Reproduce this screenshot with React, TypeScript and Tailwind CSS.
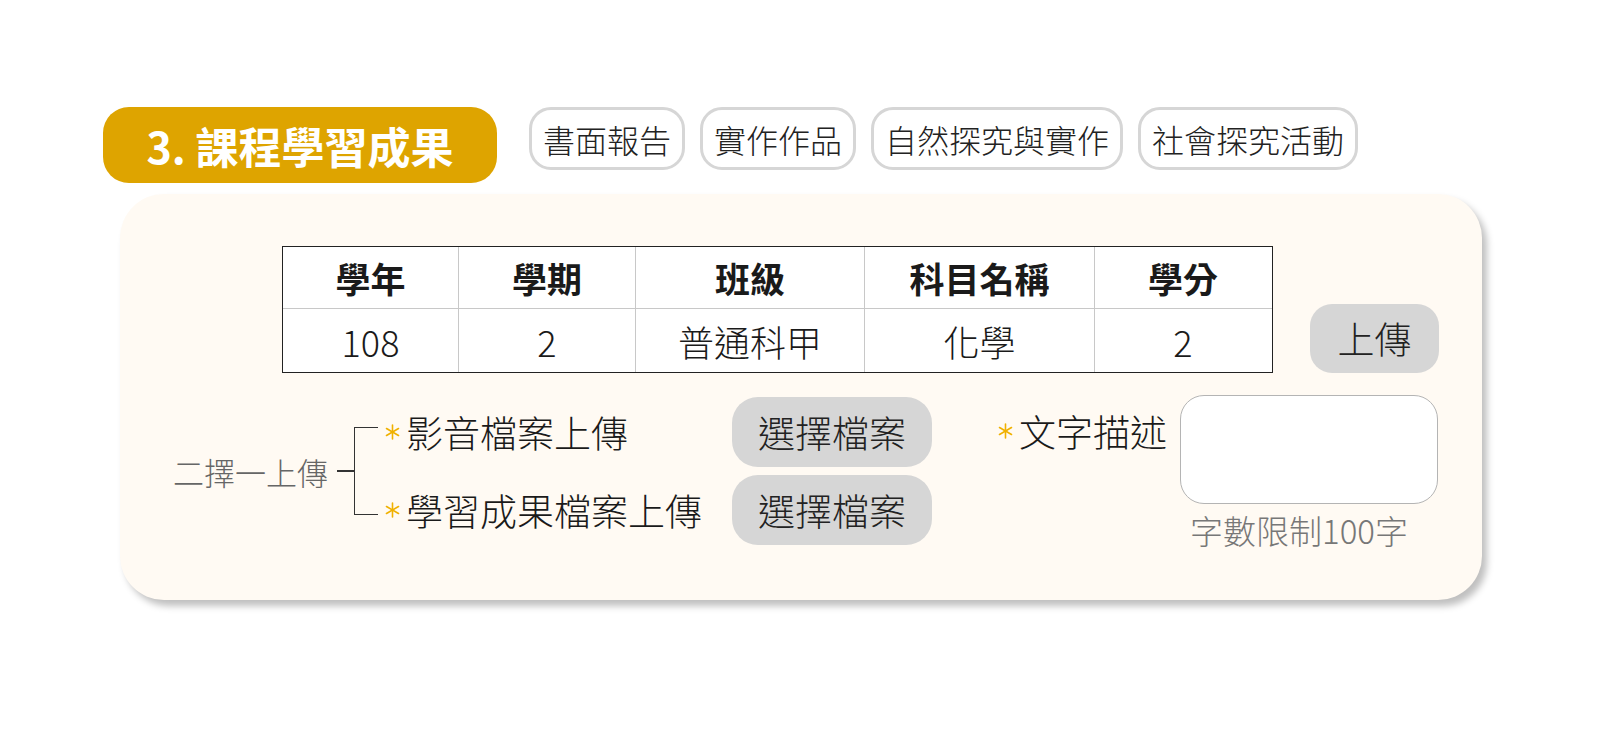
import React from 'react';

const font = { fontFamily: '"Noto Sans CJK TC", "Noto Sans", sans-serif' };

const tags = ['書面報告', '實作作品', '自然探究與實作', '社會探究活動'];

const headers = ['學年', '學期', '班級', '科目名稱', '學分'];
const values = ['108', '2', '普通科甲', '化學', '2'];

const Star: React.FC = () => (
  <svg width="15" height="16" viewBox="0 0 15 16" className="shrink-0">
    <g stroke="#f0b100" strokeWidth="1.6" strokeLinecap="round">
      <line x1="7.5" y1="1" x2="7.5" y2="15" />
      <line x1="1.5" y1="4.5" x2="13.5" y2="11.5" />
      <line x1="1.5" y1="11.5" x2="13.5" y2="4.5" />
    </g>
  </svg>
);

const App: React.FC = () => {
  return (
    <div className="min-h-screen bg-white pt-[107px] pl-[103px] font-light text-[#1a1a1a]" style={font}>
      {/* Title and tags */}
      <div className="flex items-start gap-[32px]">
        <div className="flex h-[76px] w-[394px] items-center justify-center rounded-[26px] bg-[#dea400] text-[43px] font-bold leading-none text-white">
          3. 課程學習成果
        </div>
        <div className="flex gap-[15px]">
          {tags.map((t) => (
            <div
              key={t}
              className="flex h-[63px] items-center rounded-[22px] border-[3px] border-[#d6d6d6] bg-white px-[11px] text-[32px] leading-none text-[#222]"
            >
              {t}
            </div>
          ))}
        </div>
      </div>

      {/* Card */}
      <div className="mt-[11px] ml-[17px] h-[406px] w-[1362px] rounded-[44px] bg-[#fffaf3] pt-[52px] shadow-[5px_6px_7px_rgba(0,0,0,0.25)]">
        <div className="flex items-end pl-[162px]">
          <div className="w-[991px] border-[1.5px] border-[#222] bg-white">
            <div className="grid grid-cols-[176px_177px_229px_230px_176px] border-b border-[#c8c8c8]">
              {headers.map((h, i) => (
                <div
                  key={h}
                  className={`flex h-[61px] items-center justify-center text-[35px] font-bold leading-none ${i < 4 ? 'border-r border-[#c8c8c8]' : ''}`}
                >
                  {h}
                </div>
              ))}
            </div>
            <div className="grid grid-cols-[176px_177px_229px_230px_176px]">
              {values.map((v, i) => (
                <div
                  key={i}
                  className={`flex h-[63px] items-center justify-center text-[36px] leading-none ${i < 4 ? 'border-r border-[#c8c8c8]' : ''}`}
                >
                  {v}
                </div>
              ))}
            </div>
          </div>
          <button className="ml-[37px] flex h-[69px] w-[129px] items-center justify-center rounded-[22px] bg-[#d6d6d6] text-[37px] leading-none text-[#222]">
            上傳
          </button>
        </div>

        <div className="mt-[22px] flex items-start pl-[53px]">
          {/* Upload choice */}
          <div className="mt-[2px] flex h-[148px] items-center">
            <span className="w-[156px] text-[31px] leading-none text-[#666]">二擇一上傳</span>
            <div className="ml-[8px] h-[1.5px] w-[17px] bg-[#333]" />
            <div className="h-[88px] w-[24px] border-y-[1.5px] border-l-[1.5px] border-[#333]" />
            <div className="flex w-[354px] flex-col gap-[8px]">
              <div className="flex h-[70px] items-center">
                <span className="ml-[7px] mr-[6px]"><Star /></span>
                <span className="text-[37px] leading-none">影音檔案上傳</span>
              </div>
              <div className="flex h-[70px] items-center">
                <span className="ml-[7px] mr-[6px]"><Star /></span>
                <span className="text-[37px] leading-none">學習成果檔案上傳</span>
              </div>
            </div>
            <div className="flex flex-col gap-[8px]">
              <button className="flex h-[70px] w-[200px] items-center justify-center rounded-[26px] bg-[#d6d6d6] text-[37px] leading-none text-[#222]">
                選擇檔案
              </button>
              <button className="flex h-[70px] w-[200px] items-center justify-center rounded-[26px] bg-[#d6d6d6] text-[37px] leading-none text-[#222]">
                選擇檔案
              </button>
            </div>
          </div>

          {/* Description */}
          <div className="ml-[66px] flex h-[72px] items-center">
            <span className="mr-[6px]"><Star /></span>
            <span className="text-[37px] leading-none">文字描述</span>
          </div>
          <div className="ml-[13px] flex flex-col">
            <div className="h-[109px] w-[258px] rounded-[24px] border border-[#b4b4b4] bg-white" />
            <span className="mt-[10px] pl-[10px] text-[33px] leading-none text-[#777]">字數限制100字</span>
          </div>
        </div>
      </div>
    </div>
  );
};

export default App;
